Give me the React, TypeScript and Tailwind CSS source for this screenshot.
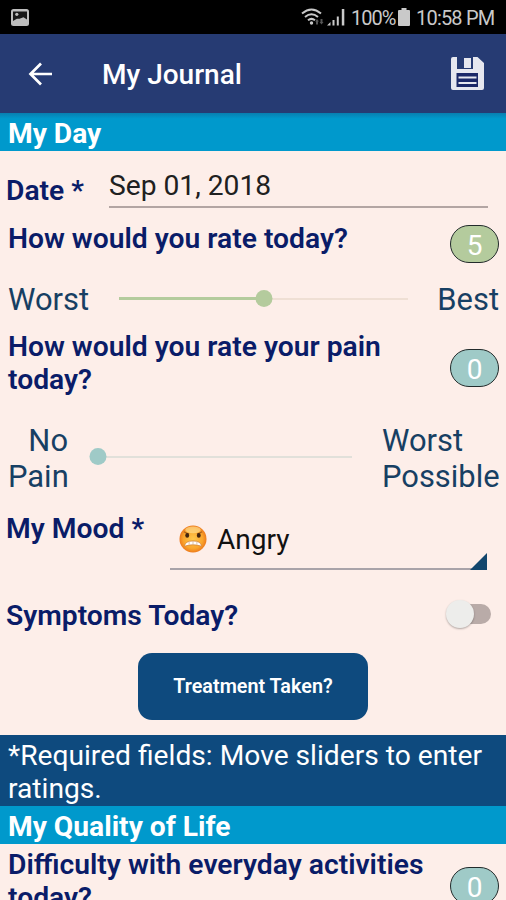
import type { ReactNode } from 'react';

function Question({ children, className = '' }: { children: ReactNode; className?: string }) {
  return <div className={`text-[28.25px] leading-[33px] font-semibold text-[#0a1c68] ${className}`}>{children}</div>;
}

function Rating({ value, className }: { value: number; className: string }) {
  return (
    <div className={`flex h-[38px] w-[49px] shrink-0 items-center justify-center rounded-full border-[1.5px] border-[#222b2b] pt-0.5 text-[28px] leading-[33px] text-white ${className}`}>
      {value}
    </div>
  );
}

function Section({ children, className = '' }: { children: ReactNode; className?: string }) {
  return <div className={`h-[38px] shrink-0 bg-[#0099cc] px-2 text-[28.2px] leading-[33px] font-bold text-white ${className}`}>{children}</div>;
}

function StatusBar() {
  return (
    <div className="flex h-[34px] shrink-0 items-center bg-black text-[#c9c9c9]">
      <svg className="ml-[11px] h-[17px] w-[18px]" viewBox="0 0 18 17">
        <rect x="0" y="0" width="18" height="17" rx="2.5" fill="#bdbdbd" />
        <path d="M2 2.500h14v8l-3.500-2.200-4 1.500-2.600 0L2 12z" fill="#171717" />
        <circle cx="5.800" cy="5.300" r="1.600" fill="#bdbdbd" />
      </svg>
      <svg className="ml-[272px] h-[18px] w-[23px]" viewBox="0 0 23 18" fill="none">
        <path d="M1 5.500Q10.500 -2.500 20 5.500M4 9Q10.500 3.500 17 9M7 12.300Q10.500 9.500 14 12.300" stroke="#c9c9c9" strokeWidth="2" />
        <circle cx="10.500" cy="15" r="1.700" fill="#c9c9c9" />
        <path d="M14 13.500l2-2.500 2 2.500h-1v3h-2v-3zM18.500 14h1v-3h2v3h1l-2 2.500z" fill="#555" />
      </svg>
      <svg className="ml-[3px] h-[18px] w-[19px]" viewBox="0 0 19 18" fill="#c9c9c9">
        <path d="M0 17.500L3.500 14v3.500zM5.500 12H7.500v5.500H5.500zM9.800 8.500h2v9h-2zM14.800 1h2.500v16.500h-2.500z" />
      </svg>
      <span className="ml-[5px] w-[44px] pt-[2px] text-[20px] leading-6 tracking-[-1px] whitespace-nowrap">100%</span>
      <svg className="ml-[3px] h-[18px] w-[12px]" viewBox="0 0 12 18" fill="#c9c9c9">
        <path d="M3.500 0h5v2H11q1 0 1 1v14q0 1-1 1H1q-1 0-1-1V3q0-1 1-1h2.500z" />
      </svg>
      <span className="ml-[6px] pt-[2px] text-[20px] leading-6 tracking-[-0.8px] whitespace-nowrap">10:58 PM</span>
    </div>
  );
}

function AppBar() {
  return (
    <div className="flex h-[79px] shrink-0 items-center bg-[#263b73] text-white">
      <svg className="ml-[28px] h-[24px] w-[24px]" viewBox="0 0 24 24" fill="none" stroke="#fff" strokeWidth="2.700">
        <path d="M24 12H3M13 1.500L2.500 12L13 22.500" />
      </svg>
      <h1 className="ml-[50px] pt-[2px] text-[28px] leading-[33px] font-medium">My Journal</h1>
      <svg className="mr-[22px] ml-auto h-[33px] w-[33px]" viewBox="0 0 33 33">
        <path d="M2 0h4v12h16V0h4.500l6.500 6v25q0 2-2 2H2q-2 0-2-2V2q0-2 2-2z" fill="#e6e7ef" />
        <path d="M5.500 16h21.500v14H5.500z" fill="#1b2868" />
        <path d="M13 1h7v10h-7z" fill="#e6e7ef" />
        <path d="M7.500 19.500h18v2h-18zM7.500 25h18v2h-18z" fill="#e6e7ef" />
      </svg>
    </div>
  );
}

function Slider({ value, width, fill, track }: { value: number; width: string; fill: string; track: string }) {
  return (
    <div className={`relative flex h-[17px] items-center ${width}`}>
      <div className={`h-[2px] w-full ${track}`} />
      <div className={`absolute left-0 h-[3px] ${fill}`} style={{ width: `${value * 10}%` }} />
      <div className={`absolute size-[17px] -translate-x-1/2 rounded-full ${fill}`} style={{ left: `${value * 10}%` }} />
    </div>
  );
}

function AngryFace() {
  return (
    <svg className="mt-[1px] h-[28px] w-[28px]" viewBox="0 0 29 29">
      <defs>
        <radialGradient id="face" cx=".5" cy=".5" r=".55">
          <stop offset="0" stopColor="#ffc94d" />
          <stop offset=".65" stopColor="#faa52c" />
          <stop offset="1" stopColor="#e96d17" />
        </radialGradient>
      </defs>
      <circle cx="14.500" cy="14.500" r="14" fill="url(#face)" />
      <ellipse cx="14.500" cy="5" rx="8" ry="3.500" fill="#ffe49a" opacity=".6" />
      <path d="M5 7l5.500 2.500M24 7l-5.500 2.500" stroke="#a85f1c" strokeWidth="1.200" />
      <ellipse cx="8.500" cy="10.800" rx="2" ry="2.400" fill="#43250f" />
      <ellipse cx="20.500" cy="10.800" rx="2" ry="2.400" fill="#43250f" />
      <path d="M5.500 22Q6.500 16.500 14.500 16.500T23.500 22Q18.500 20.500 14.500 20.500T5.500 22z" fill="#fff" stroke="#d2853a" strokeWidth=".8" />
      <path d="M10.500 17.200v3M14.500 16.500v3.500M18.500 17.200v3" stroke="#cfa780" strokeWidth=".7" />
    </svg>
  );
}

export default function App() {
  return (
    <main className="flex h-[900px] w-[506px] flex-col overflow-hidden bg-[#fdeee9] font-[Roboto,sans-serif]">
      <StatusBar />
      <AppBar />
      <Section className="bg-linear-to-b from-[#087fb0] via-[#0099cc] via-15% to-[#0099cc] pt-[4px]">My Day</Section>

      <div className="flex h-[71px] shrink-0">
        <Question className="w-[109px] pt-[23px] pl-[6px] whitespace-nowrap">Date *</Question>
        <div className="h-[57px] w-[379px] border-b-2 border-[#b3a5a3] pt-[18px] text-[28.2px] leading-[33px] text-[#202020]">Sep 01, 2018</div>
      </div>

      <div className="flex h-[59px] shrink-0 justify-between pr-[7px] pl-2">
        <Question>How would you rate today?</Question>
        <Rating value={5} className="mt-[3px] bg-[#b4cb9d]" />
      </div>
      <div className="flex h-[49px] shrink-0 pr-[7px] pl-2 text-[30.9px] leading-[36px] text-[#173f63]">
        <span className="w-[111px] pt-[1px]">Worst</span>
        <div className="pt-[9px]">
          <Slider value={5} width="w-[289px]" fill="bg-[#b4cb9d]" track="bg-[#efdfd4]" />
        </div>
        <span className="ml-auto pt-[1px]">Best</span>
      </div>

      <div className="flex h-[92px] shrink-0 justify-between pr-[7px] pl-2">
        <Question className="w-[390px]">How would you rate your pain today?</Question>
        <Rating value={0} className="mt-[19px] bg-[#9fcac7]" />
      </div>
      <div className="flex h-[90px] shrink-0 pr-[7px] pl-2 text-[30.9px] leading-[36px] text-[#173f63]">
        <span className="w-[60px] pt-[1px] text-right">No Pain</span>
        <div className="ml-[30px] pt-[26px]">
          <Slider value={0} width="w-[254px]" fill="bg-[#9fcac7]" track="bg-[#e1e0da]" />
        </div>
        <span className="ml-auto w-[117px] pt-[1px]">Worst Possible</span>
      </div>

      <div className="flex h-[87px] shrink-0">
        <Question className="w-[170px] pl-[6px] whitespace-nowrap">My Mood *</Question>
        <div className="relative flex h-[58px] w-[317px] border-b-2 border-[#a9a3a9] pt-[12px] pl-[9px] text-[28px] leading-[33px] text-[#111]">
          <AngryFace />
          <span className="-mt-[1px] ml-[10px]">Angry</span>
          <svg className="absolute right-0 -bottom-[2px] h-[17px] w-[17px]" viewBox="0 0 17 17">
            <path d="M17 0v17H0z" fill="#12466d" />
          </svg>
        </div>
      </div>

      <div className="flex h-[54px] shrink-0 justify-between pr-[15px] pl-[6px]">
        <Question>Symptoms Today?</Question>
        <div className="relative mt-[5px] h-[20px] w-[38px] rounded-full bg-[#b9aba8]">
          <div className="absolute -top-[4px] -left-[7px] size-[28px] rounded-full bg-[#ededeb] shadow-[0_1px_2px_rgba(0,0,0,0.3)]" />
        </div>
      </div>

      <div className="flex h-[82px] shrink-0 justify-center">
        <button className="h-[67px] w-[230px] rounded-[14px] bg-[#0e4a7e] pt-[1px] text-[19.8px] font-semibold text-white">Treatment Taken?</button>
      </div>

      <div className="h-[71px] shrink-0 bg-[#0e4a7e] px-2 pt-[4px] text-[28.2px] leading-[33px] text-white">*Required fields: Move sliders to enter ratings.</div>
      <Section className="pt-[4px]">My Quality of Life</Section>
      <div className="flex h-[80px] shrink-0 justify-between pt-[4px] pr-[7px] pl-2">
        <Question className="w-[430px]">Difficulty with everyday activities today?</Question>
        <Rating value={0} className="mt-[19px] bg-[#9fcac7]" />
      </div>
    </main>
  );
}
